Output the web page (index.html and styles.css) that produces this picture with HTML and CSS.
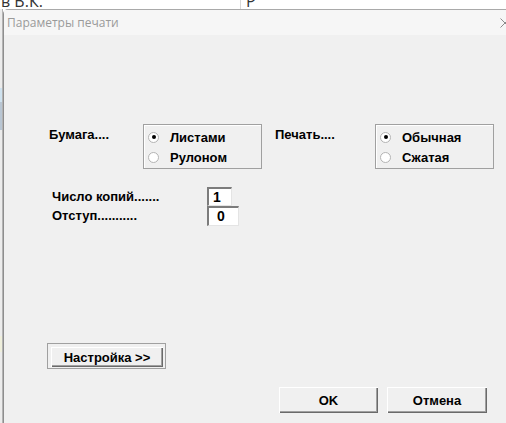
FILE: index.html
```html
<!DOCTYPE html>
<html lang="ru">
<head>
    <meta charset="UTF-8">
    <meta name="viewport" content="width=device-width, initial-scale=1.0">
    <title>Параметры печати</title>
    <link rel="stylesheet" href="styles.css">
</head>
<body>
    <div class="behind-top">
        <span class="behind-name">в В.К.</span>
        <span class="behind-col">Р</span>
    </div>
    <div class="behind-left"></div>

    <div class="dialog">
        <div class="titlebar">
            <span class="title">Параметры печати</span>
            <svg class="close" width="10" height="10" viewBox="0 0 10 10">
                <path d="M0.5 0.5 L9.5 9.5 M9.5 0.5 L0.5 9.5" stroke="#8c8c8c" stroke-width="1" fill="none"/>
            </svg>
        </div>

        <div class="content">
            <div class="options">
                <div class="opt-label">Бумага....</div>
                <div class="group">
                    <label class="radio"><span class="dot checked"></span>Листами</label>
                    <label class="radio"><span class="dot"></span>Рулоном</label>
                </div>
                <div class="opt-label second">Печать....</div>
                <div class="group">
                    <label class="radio"><span class="dot checked"></span>Обычная</label>
                    <label class="radio"><span class="dot"></span>Сжатая</label>
                </div>
            </div>

            <div class="fields">
                <div class="field-label">Число копий.......</div>
                <div class="field-box narrow">1</div>
                <div class="field-label">Отступ...........</div>
                <div class="field-box wide">0</div>
            </div>

            <div class="btn-frame">
                <button class="btn setup">Настройка &gt;&gt;</button>
            </div>

            <div class="actions">
                <button class="btn action">OK</button>
                <button class="btn action">Отмена</button>
            </div>
        </div>
    </div>
</body>
</html>
```

FILE: styles.css
```css
body {
    margin: 0;
    width: 506px;
    height: 423px;
    overflow: hidden;
    background-color: #fff;
    display: grid;
    grid-template-columns: 3px 1fr;
    grid-template-rows: 9px 1fr;
}

.behind-top {
    grid-column: 1 / 3;
    height: 9px;
    overflow: hidden;
    position: relative;
    font-family: "Open Sans", sans-serif;
    font-size: 16px;
    line-height: 16px;
    color: #333;
    display: flex;
}

.behind-name {
    margin-top: -7px;
    padding-left: 1px;
    width: 239px;
    border-right: 1px solid #d8d8d8;
}

.behind-col {
    margin-top: -7px;
    padding-left: 5px;
}

.behind-left {
    background: linear-gradient(to bottom,
        #ececec 0, #ececec 79px,
        #cfe2ef 79px, #cfe2ef 93px,
        #b9c6d3 93px, #b9c6d3 121px,
        #ececec 121px, #ececec 327px,
        #efefdc 327px, #efefdc 343px,
        #ececec 343px);
    border-right: 1px solid #b4b4b4;
    box-sizing: border-box;
}

.dialog {
    width: 520px;
    background-color: #f0f0f0;
    border-top: 1px solid #a9a9a9;
    border-left: 1px solid #8e8e8e;
    border-top-left-radius: 5px;
    font-family: "Liberation Sans", Arial, sans-serif;
}

.titlebar {
    height: 25px;
    background-color: #f6f6f6;
    display: flex;
    align-items: center;
    justify-content: space-between;
    padding: 0 14px 0 3px;
}

.title {
    font-family: "Open Sans", sans-serif;
    font-size: 12px;
    color: #9a9a9a;
}

.close {
    margin-top: 1px;
}

.content {
    padding: 89px 0 0 45px;
    font-size: 13px;
    font-weight: bold;
    color: #000;
}

.options {
    display: flex;
    align-items: flex-start;
}

.opt-label {
    width: 94px;
    padding-top: 3px;
    line-height: 15px;
}

.opt-label.second {
    width: 100px;
    margin-left: 13px;
}

.group {
    width: 119px;
    height: 45px;
    box-sizing: border-box;
    border: 1px solid #a0a0a0;
    box-shadow: inset 1px 1px #fff;
    padding-top: 2px;
}

.radio {
    display: flex;
    align-items: center;
    height: 20px;
    padding-left: 4px;
}

.dot {
    width: 11px;
    height: 11px;
    box-sizing: border-box;
    border: 1px solid #b4b4b4;
    border-radius: 50%;
    background-color: #fff;
    margin-right: 11px;
    display: flex;
    align-items: center;
    justify-content: center;
}

.dot.checked::after {
    content: "";
    width: 4px;
    height: 4px;
    border-radius: 50%;
    background-color: #000;
}

.fields {
    display: grid;
    grid-template-columns: 155px auto;
    grid-template-rows: 19px 20px;
    justify-items: start;
    margin: 18px 0 0 3px;
}

.field-label {
    line-height: 15px;
    padding-top: 2px;
}

.field-box {
    box-sizing: border-box;
    height: 100%;
    background-color: #fff;
    border-top: 2px solid #7c7c7c;
    border-left: 2px solid #7c7c7c;
    border-right: 1px solid #e4e4e4;
    border-bottom: 1px solid #e4e4e4;
    line-height: 17px;
    font-size: 14px;
}

.field-box.narrow {
    width: 25px;
    padding-left: 4px;
}

.field-box.wide {
    width: 32px;
    padding-left: 8px;
}

.btn {
    font-family: "Liberation Sans", Arial, sans-serif;
    font-size: 13px;
    font-weight: bold;
    color: #000;
    background-color: #f0f0f0;
    border: none;
    padding: 0;
    box-shadow: inset 1px 1px #fff, inset -1px -1px #6a6a6a, inset -2px -2px #a0a0a0;
}

.btn-frame {
    display: inline-block;
    margin: 117px 0 0 -2px;
    border: 1px solid #a0a0a0;
    padding: 3px 2px 1px 3px;
}

.btn.setup {
    display: block;
    width: 112px;
    height: 20px;
}

.actions {
    display: flex;
    gap: 9px;
    margin: 18px 0 0 230px;
}

.btn.action {
    width: 99px;
    height: 26px;
}

.btn.action + .btn.action {
    width: 100px;
}
```
